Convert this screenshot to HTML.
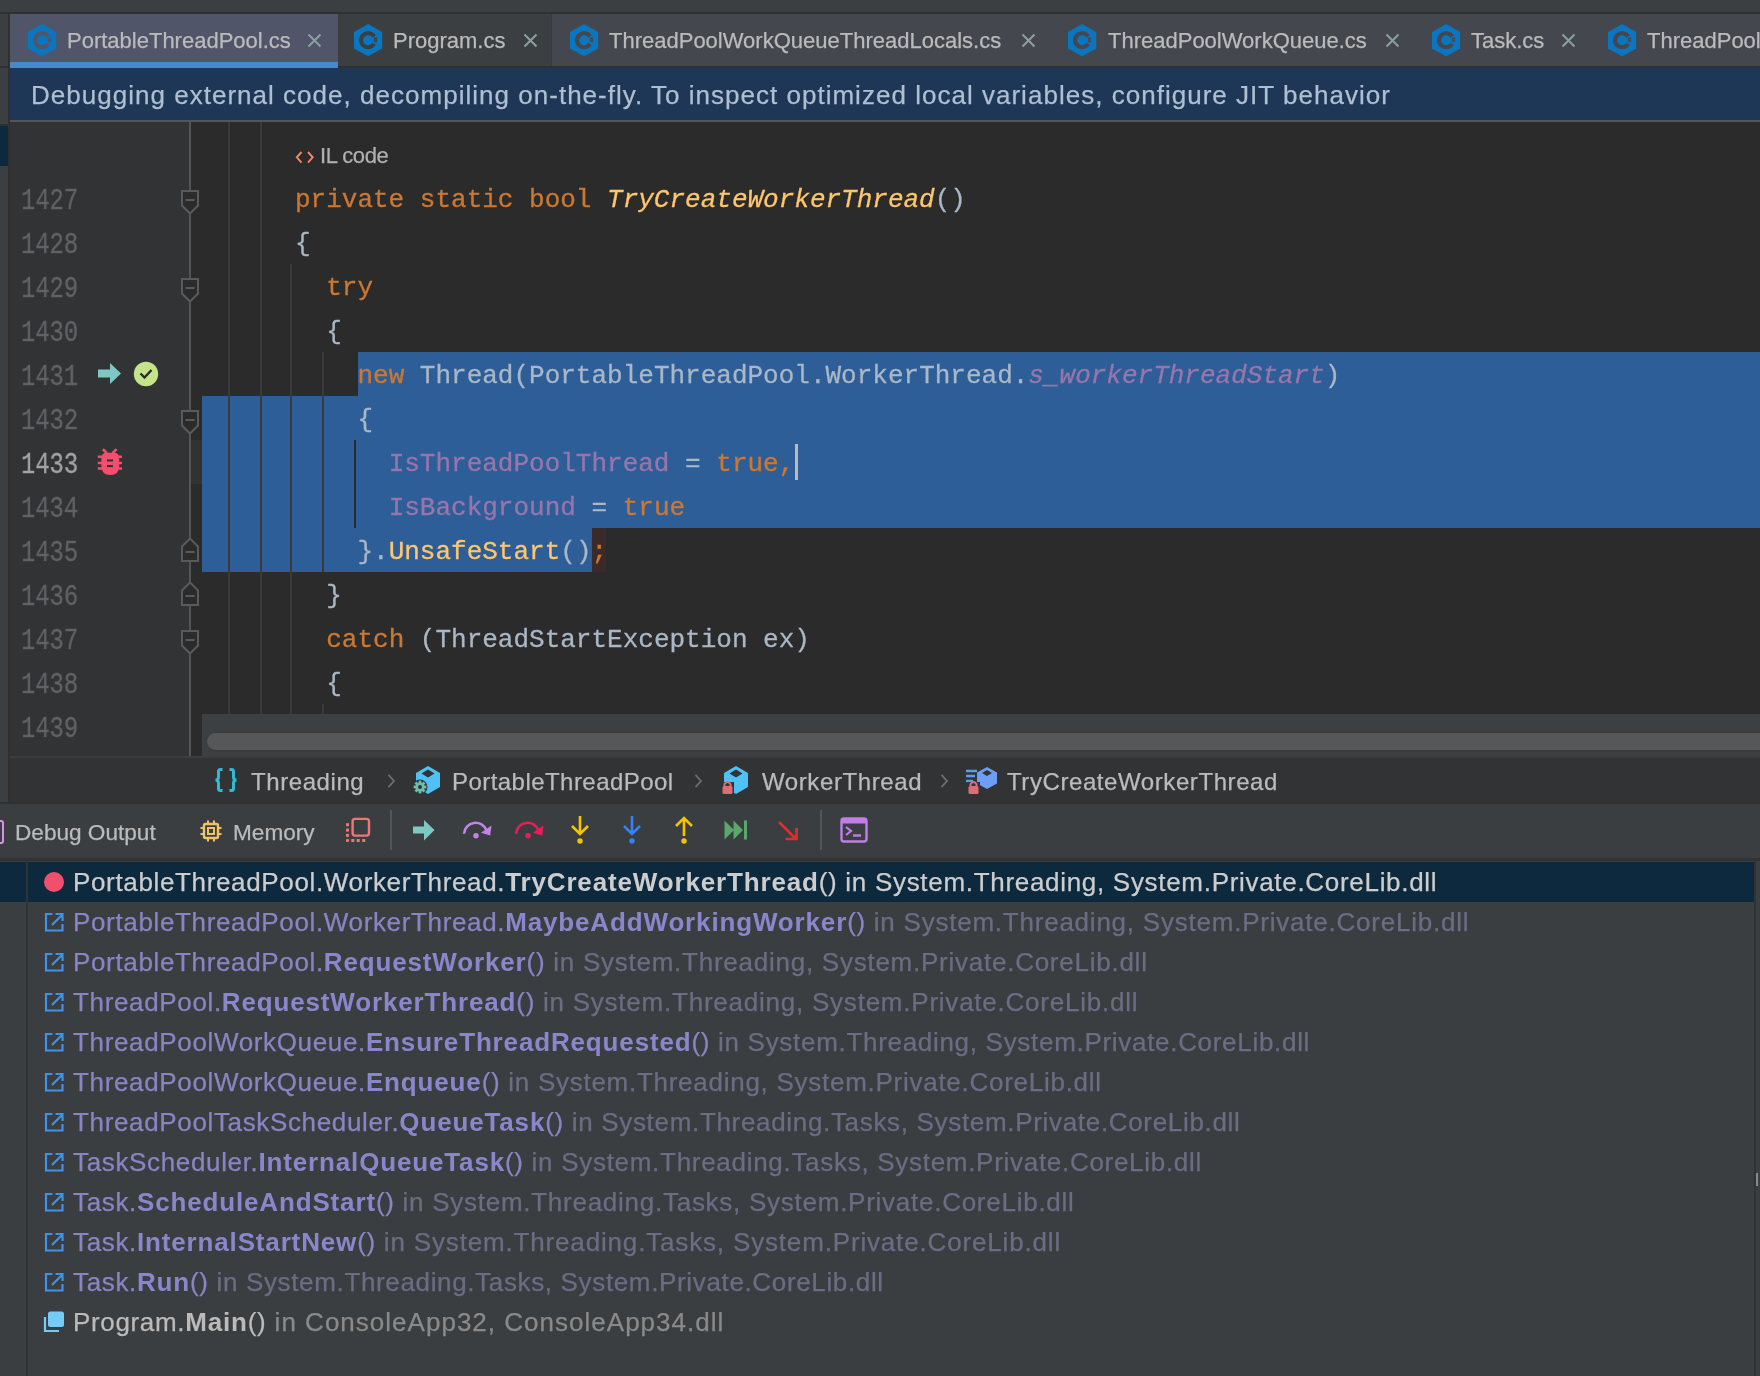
<!DOCTYPE html>
<html><head><meta charset="utf-8"><style>
html,body{margin:0;padding:0;width:1760px;height:1376px;overflow:hidden;background:#3c3f41}
body>div,body>svg{position:absolute;white-space:pre}
.t{will-change:transform}
</style></head><body>
<div style="left:0px;top:0px;width:1760px;height:1376px;background:#3c3f41;"></div>
<div style="left:0px;top:12px;width:1760px;height:2px;background:#2e3031;"></div>
<div style="left:8px;top:14px;width:2px;height:790px;background:#2e3031;"></div>
<div style="left:0px;top:66px;width:8px;height:2px;background:#2e3031;"></div>
<div style="left:0px;top:124px;width:8px;height:2px;background:#2e3031;"></div>
<div style="left:0px;top:126px;width:8px;height:40px;background:#0d293e;"></div>
<div style="left:10px;top:14px;width:1750px;height:54px;background:#45474f;"></div>
<div style="left:338px;top:14px;width:213px;height:54px;background:#3c3f41;"></div>
<div style="left:551px;top:14px;width:1px;height:52px;background:#37393b;"></div>
<div style="left:10px;top:14px;width:328px;height:54px;background:#51556a;"></div>
<div style="left:10px;top:62px;width:328px;height:6px;background:#4a88c7;"></div>
<div style="left:338px;top:66px;width:1422px;height:2px;background:#2e3031;"></div>
<svg style="left:28px;top:24px" width="29" height="33" viewBox="0 0 29 33">
<polygon points="14.1,0 28.2,8 28.2,24.5 14.1,32.3 0,24.5 0,8" fill="#0a76bf"/>
<path d="M20.04,12.49 A7,7 0 1 0 20.04,19.91" fill="none" stroke="#51556a" stroke-width="4"/>
<path d="M19.8,14.6 h3.4 M19.8,16.9 h3.4 M20.7,13.3 v5 M22.3,13.3 v5" stroke="#51556a" stroke-width="1" fill="none"/>
</svg>
<div class="t" style="left:67px;top:29.09px;font-family:'Liberation Sans', sans-serif;font-size:22px;line-height:24.57px;color:#bbbbbb;-webkit-text-stroke:0.25px currentColor;">PortableThreadPool.cs</div>
<svg style="left:307px;top:33px" width="15" height="15" viewBox="0 0 15 15">
<path d="M1.5,1.5 L13.5,13.5 M13.5,1.5 L1.5,13.5" stroke="#8c9fa3" stroke-width="2" fill="none"/></svg>
<svg style="left:354px;top:24px" width="29" height="33" viewBox="0 0 29 33">
<polygon points="14.1,0 28.2,8 28.2,24.5 14.1,32.3 0,24.5 0,8" fill="#0a76bf"/>
<path d="M20.04,12.49 A7,7 0 1 0 20.04,19.91" fill="none" stroke="#3c3f41" stroke-width="4"/>
<path d="M19.8,14.6 h3.4 M19.8,16.9 h3.4 M20.7,13.3 v5 M22.3,13.3 v5" stroke="#3c3f41" stroke-width="1" fill="none"/>
</svg>
<div class="t" style="left:393px;top:29.09px;font-family:'Liberation Sans', sans-serif;font-size:22px;line-height:24.57px;color:#bbbbbb;-webkit-text-stroke:0.25px currentColor;">Program.cs</div>
<svg style="left:523px;top:33px" width="15" height="15" viewBox="0 0 15 15">
<path d="M1.5,1.5 L13.5,13.5 M13.5,1.5 L1.5,13.5" stroke="#8c9fa3" stroke-width="2" fill="none"/></svg>
<svg style="left:570px;top:24px" width="29" height="33" viewBox="0 0 29 33">
<polygon points="14.1,0 28.2,8 28.2,24.5 14.1,32.3 0,24.5 0,8" fill="#0a76bf"/>
<path d="M20.04,12.49 A7,7 0 1 0 20.04,19.91" fill="none" stroke="#45474f" stroke-width="4"/>
<path d="M19.8,14.6 h3.4 M19.8,16.9 h3.4 M20.7,13.3 v5 M22.3,13.3 v5" stroke="#45474f" stroke-width="1" fill="none"/>
</svg>
<div class="t" style="left:608.6px;top:29.09px;font-family:'Liberation Sans', sans-serif;font-size:22px;line-height:24.57px;color:#bbbbbb;-webkit-text-stroke:0.25px currentColor;">ThreadPoolWorkQueueThreadLocals.cs</div>
<svg style="left:1021px;top:33px" width="15" height="15" viewBox="0 0 15 15">
<path d="M1.5,1.5 L13.5,13.5 M13.5,1.5 L1.5,13.5" stroke="#8c9fa3" stroke-width="2" fill="none"/></svg>
<svg style="left:1068px;top:24px" width="29" height="33" viewBox="0 0 29 33">
<polygon points="14.1,0 28.2,8 28.2,24.5 14.1,32.3 0,24.5 0,8" fill="#0a76bf"/>
<path d="M20.04,12.49 A7,7 0 1 0 20.04,19.91" fill="none" stroke="#45474f" stroke-width="4"/>
<path d="M19.8,14.6 h3.4 M19.8,16.9 h3.4 M20.7,13.3 v5 M22.3,13.3 v5" stroke="#45474f" stroke-width="1" fill="none"/>
</svg>
<div class="t" style="left:1107.5px;top:29.09px;font-family:'Liberation Sans', sans-serif;font-size:22px;line-height:24.57px;color:#bbbbbb;-webkit-text-stroke:0.25px currentColor;">ThreadPoolWorkQueue.cs</div>
<svg style="left:1385px;top:33px" width="15" height="15" viewBox="0 0 15 15">
<path d="M1.5,1.5 L13.5,13.5 M13.5,1.5 L1.5,13.5" stroke="#8c9fa3" stroke-width="2" fill="none"/></svg>
<svg style="left:1432px;top:24px" width="29" height="33" viewBox="0 0 29 33">
<polygon points="14.1,0 28.2,8 28.2,24.5 14.1,32.3 0,24.5 0,8" fill="#0a76bf"/>
<path d="M20.04,12.49 A7,7 0 1 0 20.04,19.91" fill="none" stroke="#45474f" stroke-width="4"/>
<path d="M19.8,14.6 h3.4 M19.8,16.9 h3.4 M20.7,13.3 v5 M22.3,13.3 v5" stroke="#45474f" stroke-width="1" fill="none"/>
</svg>
<div class="t" style="left:1470.6px;top:29.09px;font-family:'Liberation Sans', sans-serif;font-size:22px;line-height:24.57px;color:#bbbbbb;-webkit-text-stroke:0.25px currentColor;">Task.cs</div>
<svg style="left:1561px;top:33px" width="15" height="15" viewBox="0 0 15 15">
<path d="M1.5,1.5 L13.5,13.5 M13.5,1.5 L1.5,13.5" stroke="#8c9fa3" stroke-width="2" fill="none"/></svg>
<svg style="left:1608px;top:24px" width="29" height="33" viewBox="0 0 29 33">
<polygon points="14.1,0 28.2,8 28.2,24.5 14.1,32.3 0,24.5 0,8" fill="#0a76bf"/>
<path d="M20.04,12.49 A7,7 0 1 0 20.04,19.91" fill="none" stroke="#45474f" stroke-width="4"/>
<path d="M19.8,14.6 h3.4 M19.8,16.9 h3.4 M20.7,13.3 v5 M22.3,13.3 v5" stroke="#45474f" stroke-width="1" fill="none"/>
</svg>
<div class="t" style="left:1646.5px;top:29.09px;font-family:'Liberation Sans', sans-serif;font-size:22px;line-height:24.57px;color:#bbbbbb;-webkit-text-stroke:0.25px currentColor;">ThreadPoolWorkQueue.cs</div>
<div style="left:10px;top:68px;width:1750px;height:52px;background:#1e3756;"></div>
<div style="left:10px;top:120px;width:1750px;height:2px;background:#555555;"></div>
<div class="t" style="left:31px;top:80.97px;font-family:'Liberation Sans', sans-serif;font-size:26px;line-height:29.04px;color:#b0bfd0;letter-spacing:1.02px;-webkit-text-stroke:0.25px currentColor;">Debugging external code, decompiling on-the-fly. To inspect optimized local variables, configure JIT behavior</div>
<div style="left:10px;top:122px;width:180px;height:634px;background:#313335;"></div>
<div style="left:191px;top:122px;width:1569px;height:634px;background:#2b2b2b;"></div>
<div style="left:10px;top:440px;width:180px;height:44px;background:#323335;"></div>
<div style="left:191px;top:440px;width:11px;height:44px;background:#323232;"></div>
<div style="left:358px;top:352px;width:1402px;height:44px;background:#2d5e98;"></div>
<div style="left:202px;top:396px;width:1558px;height:132px;background:#2d5e98;"></div>
<div style="left:202px;top:528px;width:390px;height:44px;background:#2d5e98;"></div>
<div style="left:592px;top:528px;width:14px;height:44px;background:#3b2a2a;"></div>
<div style="left:228px;top:122px;width:2px;height:592px;background:#3a3a3a;"></div>
<div style="left:260px;top:122px;width:2px;height:592px;background:#3a3a3a;"></div>
<div style="left:290px;top:264px;width:2px;height:450px;background:#3a3a3a;"></div>
<div style="left:322px;top:352px;width:2px;height:220px;background:#3a3a3a;"></div>
<div style="left:322px;top:704px;width:2px;height:10px;background:#3a3a3a;"></div>
<div style="left:354px;top:440px;width:2px;height:88px;background:#2b2b2b;"></div>
<div style="left:189px;top:122px;width:2px;height:634px;background:#555555;"></div>
<svg style="left:181px;top:190px" width="18" height="25" viewBox="0 0 18 25">
<path d="M1,1 H17 V15.5 L9,23.5 L1,15.5 Z" fill="#2b2b2b" stroke="#5a5a5a" stroke-width="2"/>
<path d="M4.5,10 H13.5" stroke="#5a5a5a" stroke-width="2"/></svg>
<svg style="left:181px;top:278px" width="18" height="25" viewBox="0 0 18 25">
<path d="M1,1 H17 V15.5 L9,23.5 L1,15.5 Z" fill="#2b2b2b" stroke="#5a5a5a" stroke-width="2"/>
<path d="M4.5,10 H13.5" stroke="#5a5a5a" stroke-width="2"/></svg>
<svg style="left:181px;top:410px" width="18" height="25" viewBox="0 0 18 25">
<path d="M1,1 H17 V15.5 L9,23.5 L1,15.5 Z" fill="#2b2b2b" stroke="#5a5a5a" stroke-width="2"/>
<path d="M4.5,10 H13.5" stroke="#5a5a5a" stroke-width="2"/></svg>
<svg style="left:181px;top:630px" width="18" height="25" viewBox="0 0 18 25">
<path d="M1,1 H17 V15.5 L9,23.5 L1,15.5 Z" fill="#2b2b2b" stroke="#5a5a5a" stroke-width="2"/>
<path d="M4.5,10 H13.5" stroke="#5a5a5a" stroke-width="2"/></svg>
<svg style="left:181px;top:537px" width="18" height="25" viewBox="0 0 18 25">
<path d="M1,24 H17 V9.5 L9,1.5 L1,9.5 Z" fill="#2b2b2b" stroke="#5a5a5a" stroke-width="2"/>
<path d="M4.5,15 H13.5" stroke="#5a5a5a" stroke-width="2"/></svg>
<svg style="left:181px;top:581px" width="18" height="25" viewBox="0 0 18 25">
<path d="M1,24 H17 V9.5 L9,1.5 L1,9.5 Z" fill="#2b2b2b" stroke="#5a5a5a" stroke-width="2"/>
<path d="M4.5,15 H13.5" stroke="#5a5a5a" stroke-width="2"/></svg>
<div class="t" style="left:21px;top:185.64px;font-family:'Liberation Mono', monospace;font-size:29px;line-height:32.86px;color:#606366;transform:scaleX(0.82);transform-origin:0 0;-webkit-text-stroke:0.35px currentColor;">1427</div>
<div class="t" style="left:21px;top:229.64px;font-family:'Liberation Mono', monospace;font-size:29px;line-height:32.86px;color:#606366;transform:scaleX(0.82);transform-origin:0 0;-webkit-text-stroke:0.35px currentColor;">1428</div>
<div class="t" style="left:21px;top:273.64px;font-family:'Liberation Mono', monospace;font-size:29px;line-height:32.86px;color:#606366;transform:scaleX(0.82);transform-origin:0 0;-webkit-text-stroke:0.35px currentColor;">1429</div>
<div class="t" style="left:21px;top:317.64px;font-family:'Liberation Mono', monospace;font-size:29px;line-height:32.86px;color:#606366;transform:scaleX(0.82);transform-origin:0 0;-webkit-text-stroke:0.35px currentColor;">1430</div>
<div class="t" style="left:21px;top:361.64px;font-family:'Liberation Mono', monospace;font-size:29px;line-height:32.86px;color:#606366;transform:scaleX(0.82);transform-origin:0 0;-webkit-text-stroke:0.35px currentColor;">1431</div>
<div class="t" style="left:21px;top:405.64px;font-family:'Liberation Mono', monospace;font-size:29px;line-height:32.86px;color:#606366;transform:scaleX(0.82);transform-origin:0 0;-webkit-text-stroke:0.35px currentColor;">1432</div>
<div class="t" style="left:21px;top:449.64px;font-family:'Liberation Mono', monospace;font-size:29px;line-height:32.86px;color:#a4a3a3;transform:scaleX(0.82);transform-origin:0 0;-webkit-text-stroke:0.35px currentColor;">1433</div>
<div class="t" style="left:21px;top:493.64px;font-family:'Liberation Mono', monospace;font-size:29px;line-height:32.86px;color:#606366;transform:scaleX(0.82);transform-origin:0 0;-webkit-text-stroke:0.35px currentColor;">1434</div>
<div class="t" style="left:21px;top:537.64px;font-family:'Liberation Mono', monospace;font-size:29px;line-height:32.86px;color:#606366;transform:scaleX(0.82);transform-origin:0 0;-webkit-text-stroke:0.35px currentColor;">1435</div>
<div class="t" style="left:21px;top:581.64px;font-family:'Liberation Mono', monospace;font-size:29px;line-height:32.86px;color:#606366;transform:scaleX(0.82);transform-origin:0 0;-webkit-text-stroke:0.35px currentColor;">1436</div>
<div class="t" style="left:21px;top:625.64px;font-family:'Liberation Mono', monospace;font-size:29px;line-height:32.86px;color:#606366;transform:scaleX(0.82);transform-origin:0 0;-webkit-text-stroke:0.35px currentColor;">1437</div>
<div class="t" style="left:21px;top:669.64px;font-family:'Liberation Mono', monospace;font-size:29px;line-height:32.86px;color:#606366;transform:scaleX(0.82);transform-origin:0 0;-webkit-text-stroke:0.35px currentColor;">1438</div>
<div class="t" style="left:21px;top:713.64px;font-family:'Liberation Mono', monospace;font-size:29px;line-height:32.86px;color:#606366;transform:scaleX(0.82);transform-origin:0 0;-webkit-text-stroke:0.35px currentColor;">1439</div>
<svg style="left:97px;top:362px" width="25" height="24" viewBox="0 0 25 24">
<path d="M1,7.5 H13 V1 L24,11.5 L13,22 V15.5 H1 Z" fill="#7ec8c3"/></svg>
<svg style="left:133px;top:361px" width="26" height="26" viewBox="0 0 26 26">
<circle cx="13" cy="13" r="12.2" fill="#c5e48a"/>
<path d="M7.5,12.5 L11.5,16.5 L18.5,9" stroke="#2b2b2b" stroke-width="2.4" fill="none"/></svg>
<svg style="left:97px;top:448px" width="26" height="28" viewBox="0 0 26 28">
<path d="M5.9,1.2 L10,5.2 M19.6,1.2 L15.6,5.2" stroke="#f24e6d" stroke-width="2.6"/>
<path d="M4.4,10 Q4.4,4.7 10,4.7 H16.6 Q22.2,4.7 22.2,10 V18 Q22.2,27 13.3,27 Q4.4,27 4.4,18 Z" fill="#f24e6d"/>
<path d="M0.8,8.8 H5 M21.6,8.8 H25 M0.8,14.9 H5 M21.6,14.9 H25 M0.8,20.5 H5 M21.6,20.5 H25" stroke="#f24e6d" stroke-width="2.5"/>
<rect x="10" y="11.4" width="6" height="2.1" fill="#323335"/>
<rect x="10" y="17" width="6" height="2.1" fill="#323335"/></svg>
<svg style="left:295px;top:149px" width="20" height="16" viewBox="0 0 20 16">
<path d="M6.5,3 L1.8,8.3 L6.5,13.6 M13,3 L17.7,8.3 L13,13.6" stroke="#f08a64" stroke-width="1.9" fill="none"/></svg>
<div class="t" style="left:320px;top:144.39px;font-family:'Liberation Sans', sans-serif;font-size:22px;line-height:24.57px;color:#b0b0b0;letter-spacing:-0.45px;-webkit-text-stroke:0.25px currentColor;">IL code</div>
<div class="t" style="left:294.8px;top:185.84px;font-family:'Liberation Mono', monospace;font-size:26px;line-height:29.46px;color:#a9b7c6;-webkit-text-stroke:0.3px currentColor;"><span style="color:#cc7832">private static bool </span><span style="color:#ffc66d;font-style:italic">TryCreateWorkerThread</span><span style="color:#a9b7c6">()</span></div>
<div class="t" style="left:294.8px;top:229.84px;font-family:'Liberation Mono', monospace;font-size:26px;line-height:29.46px;color:#a9b7c6;-webkit-text-stroke:0.3px currentColor;"><span style="color:#a9b7c6">{</span></div>
<div class="t" style="left:294.8px;top:273.84px;font-family:'Liberation Mono', monospace;font-size:26px;line-height:29.46px;color:#a9b7c6;-webkit-text-stroke:0.3px currentColor;">  <span style="color:#cc7832">try</span></div>
<div class="t" style="left:294.8px;top:317.84px;font-family:'Liberation Mono', monospace;font-size:26px;line-height:29.46px;color:#a9b7c6;-webkit-text-stroke:0.3px currentColor;">  <span style="color:#a9b7c6">{</span></div>
<div class="t" style="left:294.8px;top:361.84px;font-family:'Liberation Mono', monospace;font-size:26px;line-height:29.46px;color:#a9b7c6;-webkit-text-stroke:0.3px currentColor;">    <span style="color:#cc7832">new </span><span style="color:#a9b7c6">Thread(PortableThreadPool.WorkerThread.</span><span style="color:#9876aa;font-style:italic">s_workerThreadStart</span><span style="color:#a9b7c6">)</span></div>
<div class="t" style="left:294.8px;top:405.84px;font-family:'Liberation Mono', monospace;font-size:26px;line-height:29.46px;color:#a9b7c6;-webkit-text-stroke:0.3px currentColor;">    <span style="color:#a9b7c6">{</span></div>
<div class="t" style="left:294.8px;top:449.84px;font-family:'Liberation Mono', monospace;font-size:26px;line-height:29.46px;color:#a9b7c6;-webkit-text-stroke:0.3px currentColor;">      <span style="color:#9876aa">IsThreadPoolThread</span><span style="color:#a9b7c6"> = </span><span style="color:#cc7832">true,</span></div>
<div class="t" style="left:294.8px;top:493.84px;font-family:'Liberation Mono', monospace;font-size:26px;line-height:29.46px;color:#a9b7c6;-webkit-text-stroke:0.3px currentColor;">      <span style="color:#9876aa">IsBackground</span><span style="color:#a9b7c6"> = </span><span style="color:#cc7832">true</span></div>
<div class="t" style="left:294.8px;top:537.84px;font-family:'Liberation Mono', monospace;font-size:26px;line-height:29.46px;color:#a9b7c6;-webkit-text-stroke:0.3px currentColor;">    <span style="color:#a9b7c6">}.</span><span style="color:#ffc66d">UnsafeStart</span><span style="color:#a9b7c6">()</span><span style="color:#cc7832">;</span></div>
<div class="t" style="left:294.8px;top:581.84px;font-family:'Liberation Mono', monospace;font-size:26px;line-height:29.46px;color:#a9b7c6;-webkit-text-stroke:0.3px currentColor;">  <span style="color:#a9b7c6">}</span></div>
<div class="t" style="left:294.8px;top:625.84px;font-family:'Liberation Mono', monospace;font-size:26px;line-height:29.46px;color:#a9b7c6;-webkit-text-stroke:0.3px currentColor;">  <span style="color:#cc7832">catch </span><span style="color:#a9b7c6">(ThreadStartException ex)</span></div>
<div class="t" style="left:294.8px;top:669.84px;font-family:'Liberation Mono', monospace;font-size:26px;line-height:29.46px;color:#a9b7c6;-webkit-text-stroke:0.3px currentColor;">  <span style="color:#a9b7c6">{</span></div>
<div style="left:795px;top:444px;width:3px;height:36px;background:#bbbbbb;"></div>
<div style="left:202px;top:714px;width:1558px;height:42px;background:#3d4043;"></div>
<div style="left:207px;top:733px;width:1600px;height:17px;background:#555759;border-radius:9px;box-shadow:0 0 0 1.5px #393b3d"></div>
<div style="left:10px;top:756px;width:1750px;height:2px;background:#3a3c3e;"></div>
<div style="left:10px;top:758px;width:1750px;height:45px;background:#323334;"></div>
<svg style="left:213px;top:767px" width="26" height="26" viewBox="0 0 26 26">
<path d="M9.5,2.5 H7.5 Q5.5,2.5 5.5,4.5 V10 Q5.5,13 2.5,13 Q5.5,13 5.5,16 V21.5 Q5.5,23.5 7.5,23.5 H9.5 M16.5,2.5 H18.5 Q20.5,2.5 20.5,4.5 V10 Q20.5,13 23.5,13 Q20.5,13 20.5,16 V21.5 Q20.5,23.5 18.5,23.5 H16.5" stroke="#2fbbd6" stroke-width="3" fill="none"/></svg>
<div class="t" style="left:251.4px;top:768.78px;font-family:'Liberation Sans', sans-serif;font-size:24px;line-height:26.81px;color:#bbbbbb;letter-spacing:0.58px;-webkit-text-stroke:0.25px currentColor;">Threading</div>
<svg style="left:387px;top:774px" width="9" height="14" viewBox="0 0 9 14">
<path d="M1.5,0.8 L7,7 L1.5,13.2" stroke="#6b6e72" stroke-width="1.8" fill="none"/></svg>
<svg style="left:413px;top:765px" width="30" height="30" viewBox="0 0 30 30">
<polygon points="15,1 27,8 27,22 15,29 3,22 3,8" fill="#4fc1f5"/>
<polygon points="15,4.5 21.5,8.5 15,12.5 8.5,8.5" fill="#323334"/><circle cx="7" cy="22" r="7.5" fill="#323334"/>
<g fill="#6bbfae"><circle cx="7" cy="22" r="4.6"/><rect x="5.6" y="15.6" width="2.8" height="12.8"/><rect x="0.6" y="20.6" width="12.8" height="2.8"/>
<rect x="5.6" y="15.6" width="2.8" height="12.8" transform="rotate(45 7 22)"/><rect x="5.6" y="15.6" width="2.8" height="12.8" transform="rotate(-45 7 22)"/></g>
<circle cx="7" cy="22" r="2" fill="#323334"/></svg>
<div class="t" style="left:452.4px;top:768.78px;font-family:'Liberation Sans', sans-serif;font-size:24px;line-height:26.81px;color:#bbbbbb;letter-spacing:0.45px;-webkit-text-stroke:0.25px currentColor;">PortableThreadPool</div>
<svg style="left:694px;top:774px" width="9" height="14" viewBox="0 0 9 14">
<path d="M1.5,0.8 L7,7 L1.5,13.2" stroke="#6b6e72" stroke-width="1.8" fill="none"/></svg>
<svg style="left:721px;top:765px" width="30" height="30" viewBox="0 0 30 30">
<polygon points="15,1 27,8 27,22 15,29 3,22 3,8" fill="#4fc1f5"/>
<polygon points="15,4.5 21.5,8.5 15,12.5 8.5,8.5" fill="#323334"/><rect x="0" y="17" width="13" height="13" fill="#323334"/>
<path d="M3.5,21 V19 Q6.5,15 9.5,19 V21" stroke="#e06c75" stroke-width="2" fill="none"/>
<rect x="1.5" y="21" width="10" height="8" rx="1.5" fill="#e06c75"/></svg>
<div class="t" style="left:761.5px;top:768.78px;font-family:'Liberation Sans', sans-serif;font-size:24px;line-height:26.81px;color:#bbbbbb;letter-spacing:0.6px;-webkit-text-stroke:0.25px currentColor;">WorkerThread</div>
<svg style="left:940px;top:774px" width="9" height="14" viewBox="0 0 9 14">
<path d="M1.5,0.8 L7,7 L1.5,13.2" stroke="#6b6e72" stroke-width="1.8" fill="none"/></svg>
<svg style="left:964px;top:765px" width="36" height="30" viewBox="0 0 36 30">
<path d="M2,6 H13 M2,11 H11 M2,16 H9" stroke="#5c9ee6" stroke-width="2.4"/>
<polygon points="23,2 33,7.5 33,18.5 23,24 13,18.5 13,7.5" fill="#6c9ef8"/>
<polygon points="23,5 28,8 23,11 18,8" fill="#323334"/>
<rect x="3" y="17" width="13" height="13" fill="#323334"/>
<path d="M6.5,21 V19 Q9.5,15 12.5,19 V21" stroke="#e06c75" stroke-width="2" fill="none"/>
<rect x="4.5" y="21" width="10" height="8" rx="1.5" fill="#e06c75"/></svg>
<div class="t" style="left:1007px;top:768.78px;font-family:'Liberation Sans', sans-serif;font-size:24px;line-height:26.81px;color:#bbbbbb;letter-spacing:0.58px;-webkit-text-stroke:0.25px currentColor;">TryCreateWorkerThread</div>
<div style="left:0px;top:803px;width:1760px;height:55px;background:#3b3e41;"></div>
<div style="left:0px;top:802px;width:1760px;height:2px;background:#2f3031;"></div>
<div style="left:0px;top:858px;width:1760px;height:3px;background:#323334;"></div>
<div style="left:-20px;top:820px;width:20px;height:20px;border:2.5px solid #d98fe6;border-radius:3px"></div>
<div class="t" style="left:15px;top:819.55px;font-family:'Liberation Sans', sans-serif;font-size:22.6px;line-height:25.24px;color:#bbbbbb;-webkit-text-stroke:0.25px currentColor;">Debug Output</div>
<svg style="left:199px;top:819px" width="24" height="24" viewBox="0 0 24 24">
<rect x="5" y="5" width="14" height="14" rx="1.5" stroke="#f0c36a" stroke-width="2.4" fill="none"/>
<rect x="9" y="9" width="6" height="6" stroke="#f0c36a" stroke-width="2" fill="none"/>
<path d="M9,1.5 V5 M15,1.5 V5 M9,19 V22.5 M15,19 V22.5 M1.5,9 H5 M1.5,15 H5 M19,9 H22.5 M19,15 H22.5" stroke="#f0c36a" stroke-width="2"/></svg>
<div class="t" style="left:233.2px;top:819.55px;font-family:'Liberation Sans', sans-serif;font-size:22.6px;line-height:25.24px;color:#bbbbbb;-webkit-text-stroke:0.25px currentColor;">Memory</div>
<svg style="left:345px;top:816px" width="27" height="28" viewBox="0 0 27 28">
<rect x="7.6" y="2.9" width="16.4" height="16.7" rx="2.5" stroke="#ee7775" stroke-width="2.4" fill="none"/>
<g fill="#ee7775"><rect x="1" y="7.2" width="3" height="3"/><rect x="1" y="12.6" width="3" height="3"/><rect x="1" y="17.9" width="3" height="3"/>
<rect x="1" y="23" width="3" height="3" rx="1"/><rect x="6.3" y="23" width="3" height="3"/><rect x="11.7" y="23" width="3" height="3"/><rect x="17.2" y="23" width="3" height="3"/></g></svg>
<div style="left:390px;top:810px;width:2px;height:40px;background:#555555;"></div>
<svg style="left:412px;top:819px" width="24" height="23" viewBox="0 0 24 23">
<path d="M1,7.5 H12 V1 L22.5,11 L12,21.5 V14.5 H1 Z" fill="#7ec8c3"/></svg>
<svg style="left:462px;top:820px" width="30" height="20" viewBox="0 0 30 20">
<path d="M2,13.8 A11.6,11.6 0 0 1 24.5,10.5" stroke="#c582e8" stroke-width="2.6" fill="none"/>
<path d="M29.5,5.5 L28.2,15.5 L19,12.8 Z" fill="#c582e8"/>
<circle cx="14" cy="15.8" r="2.7" fill="#c582e8"/></svg>
<svg style="left:514px;top:820px" width="30" height="20" viewBox="0 0 30 20">
<path d="M2,13.8 A11.6,11.6 0 0 1 24.5,10.5" stroke="#ec1c5a" stroke-width="2.6" fill="none"/>
<path d="M29.5,5.5 L28.2,15.5 L19,12.8 Z" fill="#ec1c5a"/>
<circle cx="14" cy="15.8" r="2.7" fill="#ec1c5a"/></svg>
<svg style="left:570px;top:815px" width="20" height="30" viewBox="0 0 20 30">
<path d="M10,1 V19 M2,11 L10,19 L18,11" stroke="#f5c400" stroke-width="2.6" fill="none"/>
<circle cx="10" cy="26" r="2.7" fill="#f5c400"/></svg>
<svg style="left:622px;top:815px" width="20" height="30" viewBox="0 0 20 30">
<path d="M10,1 V19 M2,11 L10,19 L18,11" stroke="#3382f5" stroke-width="2.6" fill="none"/>
<circle cx="10" cy="26" r="2.7" fill="#3382f5"/></svg>
<svg style="left:674px;top:815px" width="20" height="30" viewBox="0 0 20 30">
<path d="M10,21 V3 M2,11 L10,3 L18,11" stroke="#f5c400" stroke-width="2.6" fill="none"/>
<circle cx="10" cy="26" r="2.7" fill="#f5c400"/></svg>
<svg style="left:724px;top:820px" width="24" height="20" viewBox="0 0 24 20">
<path d="M0.5,0.5 L10,10 L0.5,19.5 Z M9.5,0.5 L19,10 L9.5,19.5 Z" fill="#59a869"/>
<rect x="20" y="0.5" width="3" height="19" fill="#59a869"/></svg>
<svg style="left:777px;top:820px" width="22" height="21" viewBox="0 0 22 21">
<path d="M2,2 L19,19 M8.5,19 H19.5 V8" stroke="#d9312f" stroke-width="2.6" fill="none"/></svg>
<div style="left:820px;top:810px;width:2px;height:40px;background:#555555;"></div>
<svg style="left:840px;top:817px" width="28" height="26" viewBox="0 0 28 26">
<rect x="1.5" y="1.5" width="25" height="23" rx="2.5" stroke="#c27ee8" stroke-width="2.4" fill="none"/>
<rect x="1.5" y="1.5" width="25" height="5" fill="#c27ee8"/>
<path d="M6,10 L11,14 L6,18" stroke="#c27ee8" stroke-width="2.2" fill="none"/>
<path d="M13,18.5 H21" stroke="#c27ee8" stroke-width="2.4"/></svg>
<div style="left:0px;top:861px;width:1760px;height:515px;background:#3b3e41;"></div>
<div style="left:0px;top:862px;width:1754px;height:40px;background:#0d293e;"></div>
<div style="left:26px;top:861px;width:2px;height:515px;background:#313233;"></div>
<div style="left:1754px;top:861px;width:2px;height:515px;background:#313233;"></div>
<div style="left:1756px;top:1173px;width:2px;height:13px;background:#8a8a8a;"></div>
<div style="left:44px;top:872px;width:20px;height:20px;border-radius:50%;background:#f24f6c"></div>
<div class="t" style="left:73px;top:868.17px;font-family:'Liberation Sans', sans-serif;font-size:26px;line-height:29.04px;color:#cdcdcd;-webkit-text-stroke:0.25px currentColor;"><span style="color:#cdcdcd;letter-spacing:0.65px">PortableThreadPool.WorkerThread.</span><span style="color:#cdcdcd;font-weight:700;letter-spacing:0.85px;-webkit-text-stroke:0">TryCreateWorkerThread</span><span style="color:#cdcdcd;letter-spacing:0.65px">()</span><span style="color:#cdcdcd;letter-spacing:0.696px"> in System.Threading, System.Private.CoreLib.dll</span></div>
<svg style="left:43px;top:911px" width="22" height="22" viewBox="0 0 22 22">
<path d="M9.5,3 H3 V19.5 H19.5 V13" stroke="#3d93e8" stroke-width="2.2" fill="none"/>
<path d="M9,14 L19,4 M12.5,3 H19.5 V10" stroke="#3d93e8" stroke-width="2.2" fill="none"/></svg>
<div class="t" style="left:73px;top:908.17px;font-family:'Liberation Sans', sans-serif;font-size:26px;line-height:29.04px;color:#8985c4;-webkit-text-stroke:0.25px currentColor;"><span style="color:#8985c4;letter-spacing:0.65px">PortableThreadPool.WorkerThread.</span><span style="color:#8a86cc;font-weight:700;letter-spacing:0.85px;-webkit-text-stroke:0">MaybeAddWorkingWorker</span><span style="color:#8985c4;letter-spacing:0.65px">()</span><span style="color:#6c6c84;letter-spacing:0.771px"> in System.Threading, System.Private.CoreLib.dll</span></div>
<svg style="left:43px;top:951px" width="22" height="22" viewBox="0 0 22 22">
<path d="M9.5,3 H3 V19.5 H19.5 V13" stroke="#3d93e8" stroke-width="2.2" fill="none"/>
<path d="M9,14 L19,4 M12.5,3 H19.5 V10" stroke="#3d93e8" stroke-width="2.2" fill="none"/></svg>
<div class="t" style="left:73px;top:948.17px;font-family:'Liberation Sans', sans-serif;font-size:26px;line-height:29.04px;color:#8985c4;-webkit-text-stroke:0.25px currentColor;"><span style="color:#8985c4;letter-spacing:0.65px">PortableThreadPool.</span><span style="color:#8a86cc;font-weight:700;letter-spacing:0.85px;-webkit-text-stroke:0">RequestWorker</span><span style="color:#8985c4;letter-spacing:0.65px">()</span><span style="color:#6c6c84;letter-spacing:0.750px"> in System.Threading, System.Private.CoreLib.dll</span></div>
<svg style="left:43px;top:991px" width="22" height="22" viewBox="0 0 22 22">
<path d="M9.5,3 H3 V19.5 H19.5 V13" stroke="#3d93e8" stroke-width="2.2" fill="none"/>
<path d="M9,14 L19,4 M12.5,3 H19.5 V10" stroke="#3d93e8" stroke-width="2.2" fill="none"/></svg>
<div class="t" style="left:73px;top:988.17px;font-family:'Liberation Sans', sans-serif;font-size:26px;line-height:29.04px;color:#8985c4;-webkit-text-stroke:0.25px currentColor;"><span style="color:#8985c4;letter-spacing:0.65px">ThreadPool.</span><span style="color:#8a86cc;font-weight:700;letter-spacing:0.85px;-webkit-text-stroke:0">RequestWorkerThread</span><span style="color:#8985c4;letter-spacing:0.65px">()</span><span style="color:#6c6c84;letter-spacing:0.769px"> in System.Threading, System.Private.CoreLib.dll</span></div>
<svg style="left:43px;top:1031px" width="22" height="22" viewBox="0 0 22 22">
<path d="M9.5,3 H3 V19.5 H19.5 V13" stroke="#3d93e8" stroke-width="2.2" fill="none"/>
<path d="M9,14 L19,4 M12.5,3 H19.5 V10" stroke="#3d93e8" stroke-width="2.2" fill="none"/></svg>
<div class="t" style="left:73px;top:1028.17px;font-family:'Liberation Sans', sans-serif;font-size:26px;line-height:29.04px;color:#8985c4;-webkit-text-stroke:0.25px currentColor;"><span style="color:#8985c4;letter-spacing:0.65px">ThreadPoolWorkQueue.</span><span style="color:#8a86cc;font-weight:700;letter-spacing:0.85px;-webkit-text-stroke:0">EnsureThreadRequested</span><span style="color:#8985c4;letter-spacing:0.65px">()</span><span style="color:#6c6c84;letter-spacing:0.698px"> in System.Threading, System.Private.CoreLib.dll</span></div>
<svg style="left:43px;top:1071px" width="22" height="22" viewBox="0 0 22 22">
<path d="M9.5,3 H3 V19.5 H19.5 V13" stroke="#3d93e8" stroke-width="2.2" fill="none"/>
<path d="M9,14 L19,4 M12.5,3 H19.5 V10" stroke="#3d93e8" stroke-width="2.2" fill="none"/></svg>
<div class="t" style="left:73px;top:1068.17px;font-family:'Liberation Sans', sans-serif;font-size:26px;line-height:29.04px;color:#8985c4;-webkit-text-stroke:0.25px currentColor;"><span style="color:#8985c4;letter-spacing:0.65px">ThreadPoolWorkQueue.</span><span style="color:#8a86cc;font-weight:700;letter-spacing:0.85px;-webkit-text-stroke:0">Enqueue</span><span style="color:#8985c4;letter-spacing:0.65px">()</span><span style="color:#6c6c84;letter-spacing:0.731px"> in System.Threading, System.Private.CoreLib.dll</span></div>
<svg style="left:43px;top:1111px" width="22" height="22" viewBox="0 0 22 22">
<path d="M9.5,3 H3 V19.5 H19.5 V13" stroke="#3d93e8" stroke-width="2.2" fill="none"/>
<path d="M9,14 L19,4 M12.5,3 H19.5 V10" stroke="#3d93e8" stroke-width="2.2" fill="none"/></svg>
<div class="t" style="left:73px;top:1108.17px;font-family:'Liberation Sans', sans-serif;font-size:26px;line-height:29.04px;color:#8985c4;-webkit-text-stroke:0.25px currentColor;"><span style="color:#8985c4;letter-spacing:0.65px">ThreadPoolTaskScheduler.</span><span style="color:#8a86cc;font-weight:700;letter-spacing:0.85px;-webkit-text-stroke:0">QueueTask</span><span style="color:#8985c4;letter-spacing:0.65px">()</span><span style="color:#6c6c84;letter-spacing:0.676px"> in System.Threading.Tasks, System.Private.CoreLib.dll</span></div>
<svg style="left:43px;top:1151px" width="22" height="22" viewBox="0 0 22 22">
<path d="M9.5,3 H3 V19.5 H19.5 V13" stroke="#3d93e8" stroke-width="2.2" fill="none"/>
<path d="M9,14 L19,4 M12.5,3 H19.5 V10" stroke="#3d93e8" stroke-width="2.2" fill="none"/></svg>
<div class="t" style="left:73px;top:1148.17px;font-family:'Liberation Sans', sans-serif;font-size:26px;line-height:29.04px;color:#8985c4;-webkit-text-stroke:0.25px currentColor;"><span style="color:#8985c4;letter-spacing:0.65px">TaskScheduler.</span><span style="color:#8a86cc;font-weight:700;letter-spacing:0.85px;-webkit-text-stroke:0">InternalQueueTask</span><span style="color:#8985c4;letter-spacing:0.65px">()</span><span style="color:#6c6c84;letter-spacing:0.707px"> in System.Threading.Tasks, System.Private.CoreLib.dll</span></div>
<svg style="left:43px;top:1191px" width="22" height="22" viewBox="0 0 22 22">
<path d="M9.5,3 H3 V19.5 H19.5 V13" stroke="#3d93e8" stroke-width="2.2" fill="none"/>
<path d="M9,14 L19,4 M12.5,3 H19.5 V10" stroke="#3d93e8" stroke-width="2.2" fill="none"/></svg>
<div class="t" style="left:73px;top:1188.17px;font-family:'Liberation Sans', sans-serif;font-size:26px;line-height:29.04px;color:#8985c4;-webkit-text-stroke:0.25px currentColor;"><span style="color:#8985c4;letter-spacing:0.65px">Task.</span><span style="color:#8a86cc;font-weight:700;letter-spacing:0.85px;-webkit-text-stroke:0">ScheduleAndStart</span><span style="color:#8985c4;letter-spacing:0.65px">()</span><span style="color:#6c6c84;letter-spacing:0.739px"> in System.Threading.Tasks, System.Private.CoreLib.dll</span></div>
<svg style="left:43px;top:1231px" width="22" height="22" viewBox="0 0 22 22">
<path d="M9.5,3 H3 V19.5 H19.5 V13" stroke="#3d93e8" stroke-width="2.2" fill="none"/>
<path d="M9,14 L19,4 M12.5,3 H19.5 V10" stroke="#3d93e8" stroke-width="2.2" fill="none"/></svg>
<div class="t" style="left:73px;top:1228.17px;font-family:'Liberation Sans', sans-serif;font-size:26px;line-height:29.04px;color:#8985c4;-webkit-text-stroke:0.25px currentColor;"><span style="color:#8985c4;letter-spacing:0.65px">Task.</span><span style="color:#8a86cc;font-weight:700;letter-spacing:0.85px;-webkit-text-stroke:0">InternalStartNew</span><span style="color:#8985c4;letter-spacing:0.65px">()</span><span style="color:#6c6c84;letter-spacing:0.835px"> in System.Threading.Tasks, System.Private.CoreLib.dll</span></div>
<svg style="left:43px;top:1271px" width="22" height="22" viewBox="0 0 22 22">
<path d="M9.5,3 H3 V19.5 H19.5 V13" stroke="#3d93e8" stroke-width="2.2" fill="none"/>
<path d="M9,14 L19,4 M12.5,3 H19.5 V10" stroke="#3d93e8" stroke-width="2.2" fill="none"/></svg>
<div class="t" style="left:73px;top:1268.17px;font-family:'Liberation Sans', sans-serif;font-size:26px;line-height:29.04px;color:#8985c4;-webkit-text-stroke:0.25px currentColor;"><span style="color:#8985c4;letter-spacing:0.65px">Task.</span><span style="color:#8a86cc;font-weight:700;letter-spacing:0.85px;-webkit-text-stroke:0">Run</span><span style="color:#8985c4;letter-spacing:0.65px">()</span><span style="color:#6c6c84;letter-spacing:0.648px"> in System.Threading.Tasks, System.Private.CoreLib.dll</span></div>
<svg style="left:43px;top:1310px" width="22" height="22" viewBox="0 0 22 22">
<rect x="5" y="1.5" width="16" height="15.5" rx="2.5" fill="#74cdf7"/>
<path d="M2,7 V21 H16" stroke="#74cdf7" stroke-width="2.2" fill="none"/></svg>
<div class="t" style="left:73px;top:1308.17px;font-family:'Liberation Sans', sans-serif;font-size:26px;line-height:29.04px;color:#bbbbbb;-webkit-text-stroke:0.25px currentColor;"><span style="color:#bbbbbb;letter-spacing:0.65px">Program.</span><span style="color:#bbbbbb;font-weight:700;letter-spacing:0.85px;-webkit-text-stroke:0">Main</span><span style="color:#bbbbbb;letter-spacing:0.65px">()</span><span style="color:#8a8a8a;letter-spacing:1.012px"> in ConsoleApp32, ConsoleApp34.dll</span></div>
</body></html>
